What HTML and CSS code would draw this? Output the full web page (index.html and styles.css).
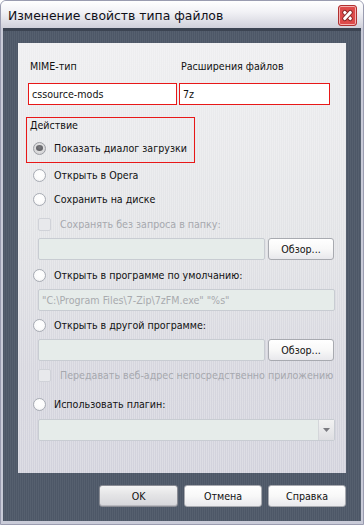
FILE: index.html
```html
<!DOCTYPE html>
<html lang="ru">
<head>
<meta charset="utf-8">
<link rel="stylesheet" href="styles.css">
</head>
<body>
<div class="window">
  <div class="titlebar">
    <span class="title">Изменение свойств типа файлов</span>
    <div class="close"><span class="xbar a"></span><span class="xbar b"></span></div>
  </div>
  <div class="frame">
    <div class="panel">
      <div class="cols labels">
        <span>MIME-тип</span>
        <span>Расширения файлов</span>
      </div>
      <div class="cols fields">
        <div class="field red">cssource-mods</div>
        <div class="field red">7z</div>
      </div>
      <div class="action">
        <div class="action-label">Действие</div>
        <div class="row radio-row first"><span class="radio checked"></span><span>Показать диалог загрузки</span></div>
      </div>
      <div class="row radio-row r2"><span class="radio"></span><span>Открыть в Opera</span></div>
      <div class="row radio-row r3"><span class="radio"></span><span>Сохранить на диске</span></div>
      <div class="row check-row c1"><span class="check"></span><span class="dim">Сохранять без запроса в папку:</span></div>
      <div class="browse-row m4"><div class="field dis grow"></div><div class="btn small">Обзор...</div></div>
      <div class="row radio-row m5"><span class="radio"></span><span>Открыть в программе по умолчанию:</span></div>
      <div class="field dis full m4 dimtext">"C:\Program Files\7-Zip\7zFM.exe" "%s"</div>
      <div class="row radio-row m4"><span class="radio"></span><span>Открыть в другой программе:</span></div>
      <div class="browse-row m4"><div class="field dis grow"></div><div class="btn small">Обзор...</div></div>
      <div class="row check-row m4"><span class="check"></span><span class="dim">Передавать веб-адрес непосредственно приложению</span></div>
      <div class="row radio-row m9"><span class="radio"></span><span>Использовать плагин:</span></div>
      <div class="field dis full select m5"><span class="arrow"><svg width="7" height="4" viewBox="0 0 7 4"><path d="M0 0 H7 L3.5 4 Z" fill="#7a7a80"/></svg></span></div>
    </div>
    <div class="buttons">
      <div class="btn default">OK</div>
      <div class="btn">Отмена</div>
      <div class="btn">Справка</div>
    </div>
  </div>
</div>
</body>
</html>
```
FILE: styles.css
```css
* { box-sizing: border-box; }
html, body { margin: 0; padding: 0; }
body {
  width: 364px;
  height: 525px;
  font-family: "DejaVu Sans Condensed", "DejaVu Sans", sans-serif;
  font-size: 10.6px;
  color: #111;
  overflow: hidden;
  white-space: nowrap;
}
.window {
  width: 364px;
  height: 525px;
  background: #c9cbd8;
  border: 1px solid #9a9cb0;
  border-radius: 6px 6px 0 0;
  display: flex;
  flex-direction: column;
  overflow: hidden;
}
.titlebar {
  height: 27px;
  flex: none;
  display: flex;
  align-items: center;
  justify-content: space-between;
  padding: 0 6px 0 7px;
  background: linear-gradient(#ffffff 0%, #f2f2f6 40%, #dcdce4 80%, #d0d0da 100%);
}
.title {
  font-family: "DejaVu Sans", sans-serif;
  font-size: 12.4px;
  color: #101018;
  margin-top: 2px;
}
.close {
  position: relative;
  width: 19px;
  height: 21px;
  flex: none;
  margin-top: 2px;
  border-radius: 3px;
  border: 1px solid #b03030;
  background: #dd4a4a;
  box-shadow: inset 0 0 0 1px #f4b0b0;
}
.xbar {
  position: absolute;
  left: 3px;
  top: 8px;
  width: 11px;
  height: 3px;
  border-radius: 1px;
  background: #ffffff;
  box-shadow: 0 0 0 1px #8a2828;
}
.xbar.a { transform: rotate(48deg); }
.xbar.b { transform: rotate(-48deg); }
.frame {
  flex: 1;
  margin: 0 2px 3px 2px;
  background: repeating-linear-gradient(90deg, #4d5767 0px, #4d5767 1px, #56606f 1px, #56606f 2px);
  border-top: 3px solid #3c4452;
  padding: 12px 15px 0 15px;
  display: flex;
  flex-direction: column;
}
.panel {
  height: 430px;
  background:
    repeating-linear-gradient(90deg, rgba(255,255,255,0.25) 0px, rgba(255,255,255,0.25) 1px, rgba(0,0,0,0) 1px, rgba(0,0,0,0) 2px),
    linear-gradient(#eeeef0 0%, #e2e3e6 45%, #d6d6de 75%, #d2d2dc 100%);
  padding: 16px 0 0 0;
  display: flex;
  flex-direction: column;
}
.cols {
  display: grid;
  grid-template-columns: 149px 151px;
  column-gap: 2px;
  margin-left: 10px;
}
.labels { height: 14px; align-items: center; }
.labels span { padding-left: 2px; line-height: 14px; }
.fields { margin-top: 10px; }
.field {
  height: 22px;
  background: #fff;
  display: flex;
  align-items: center;
  padding-left: 3px;
}
.field.red { border: 1px solid #e81818; }
.action {
  margin-top: 12px;
  margin-left: 8px;
  width: 169px;
  height: 46px;
  border: 1px solid #e81818;
  padding: 0 0 0 3px;
}
.action-label { height: 14px; line-height: 14px; }
.row {
  height: 20px;
  display: flex;
  align-items: center;
}
.radio-row { margin-left: 15px; }
.action .radio-row { margin-left: 3px; }
.radio-row .radio { margin-right: 8px; }
.first { margin-top: 6px; }
.r2 { margin-top: 2px; }
.r3 { margin-top: 4px; }
.c1 { margin-top: 5px; }
.m4 { margin-top: 4px; }
.m5 { margin-top: 5px; }
.m9 { margin-top: 9px; }
.radio {
  width: 13px;
  height: 13px;
  border-radius: 50%;
  border: 1px solid #a8acb4;
  background: radial-gradient(circle at 50% 40%, #ffffff 0%, #fbfbfb 55%, #e6e6ea 100%);
  flex: none;
  display: flex;
  align-items: center;
  justify-content: center;
}
.radio.checked {
  background: radial-gradient(circle at 50% 40%, #e8e8e8 0%, #cfcfd2 100%);
  border-color: #9a9ca2;
}
.radio.checked::after {
  content: "";
  width: 7px;
  height: 6px;
  border-radius: 50%;
  background: radial-gradient(circle at 50% 40%, #7a7a7e 0%, #55555a 100%);
}
.check-row { margin-left: 20px; }
.check {
  width: 13px;
  height: 13px;
  border: 1px solid #d0d2d8;
  border-radius: 2px;
  background: #e8e9ec;
  margin-right: 9px;
  flex: none;
}
.dim { color: #a6a8ae; }
.dimtext { color: #a8aaae; }
.browse-row {
  display: flex;
  margin-left: 20px;
  width: 296px;
  gap: 3px;
}
.field.dis {
  background: #e6ecea;
  border: 1px solid #c8ccd2;
  border-radius: 2px;
}
.grow { flex: 1; }
.full { margin-left: 20px; width: 297px; }
.select { justify-content: flex-end; padding: 0; }
.arrow {
  width: 16px;
  height: 20px;
  border-left: 1px solid #d4d6da;
  background: linear-gradient(#f2f2f2, #dedee2);
  display: flex;
  align-items: center;
  justify-content: center;
}
.btn {
  width: 78px;
  height: 22px;
  border: 1px solid #a8aab0;
  border-radius: 3px;
  background: linear-gradient(#ffffff 0%, #f8f8f8 50%, #e8e8ec 100%);
  display: flex;
  align-items: center;
  justify-content: center;
  color: #111;
}
.btn.small { width: 66px; }
.buttons {
  display: flex;
  justify-content: flex-end;
  gap: 6px;
  margin-top: 12px;
}
.btn.default {
  width: 79px;
  background: linear-gradient(#f4f4f4 0%, #e4e4e6 45%, #d6d6da 100%);
  border-color: #8a8c94;
  box-shadow: inset 0 -1px 0 #b8b8be;
}
```
